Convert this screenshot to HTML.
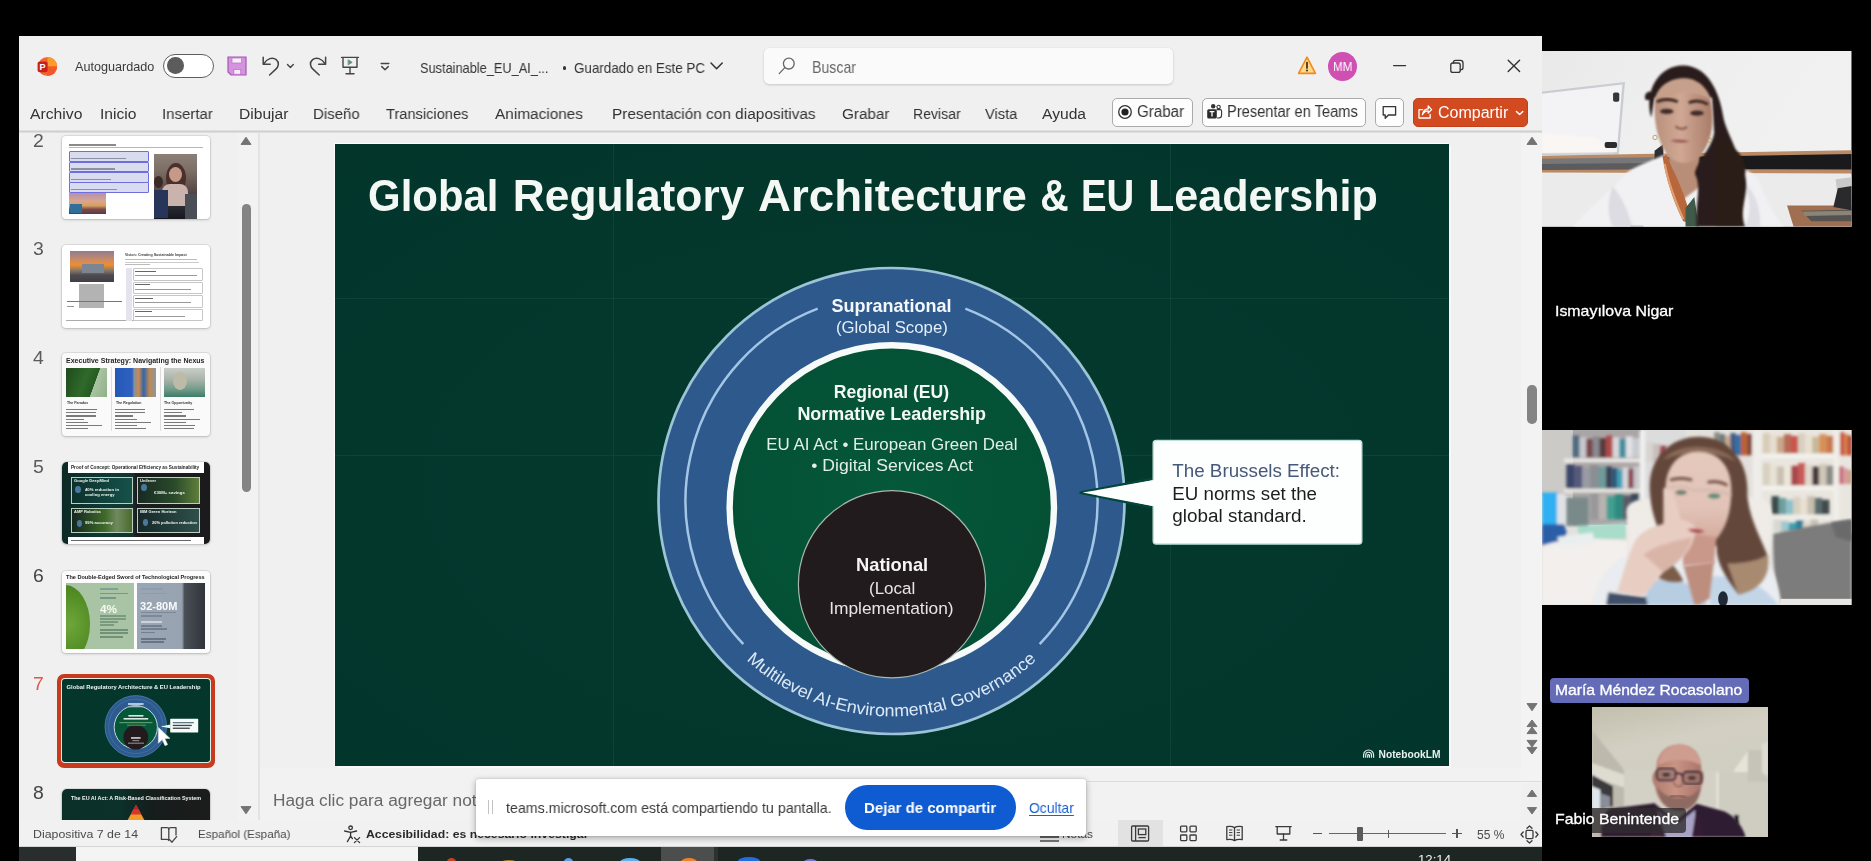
<!DOCTYPE html>
<html lang="es">
<head>
<meta charset="utf-8">
<title>PowerPoint – Microsoft Teams</title>
<style>
*{box-sizing:border-box;margin:0;padding:0}
html,body{width:1871px;height:861px;overflow:hidden;background:#000}
body{font-family:"Liberation Sans",sans-serif;position:relative;color:#222}
.abs{position:absolute}
.abs i{display:block}
#win{position:absolute;left:19px;top:36px;width:1523px;height:811px;background:#f0f0f0}
.t{position:absolute;white-space:nowrap;line-height:1;transform-origin:0 50%;will-change:transform}
.toggle{border:1.3px solid #5f5f5f;border-radius:12px;background:#fff}
.toggle i{position:absolute;left:3.6px;top:2.4px;width:16.6px;height:16.6px;border-radius:50%;background:#5c5c5c}
.search{background:#fafafa;border-radius:5px;box-shadow:0 1px 2.5px rgba(0,0,0,.16),0 0 1px rgba(0,0,0,.08)}
.avatar{border-radius:50%;background:#cf4fb2}
.btn{background:#fdfdfd;border:1px solid #ababab;border-radius:5px}
.share{background:#d24a20;border-radius:5px;border:1px solid #c2411a}
.th{border-radius:4px;box-shadow:0 0 0 1px rgba(0,0,0,.07),0 1px 3px rgba(0,0,0,.18);overflow:hidden}
svg#slide{box-shadow:-1px -1px 0 0 #fbfbfb,2px 2px 0 0 #f8f8f8}
.sharebar{background:#fff;border-radius:3px;box-shadow:0 2px 7px rgba(0,0,0,.32),0 0 2px rgba(0,0,0,.2)}
</style>
</head>
<body>
<div id="win"></div>
<div class="titlebar">
<svg class="abs" style="left:37px;top:56px" width="21" height="21" viewBox="0 0 21 21">
<circle cx="10.5" cy="10.5" r="9.6" fill="#f2682a"/>
<path d="M10.5 0.9 A9.6 9.6 0 0 1 20.1 10.5 L10.5 10.5Z" fill="#fb9b2a"/>
<path d="M10.5 10.5 L20.1 10.5 A9.6 9.6 0 0 1 10.5 20.1Z" fill="#f4572a"/>
<rect x="0.6" y="5.6" width="10" height="10.6" rx="2" fill="#c8201c"/>
<text x="5.6" y="14.2" font-family="Liberation Sans, sans-serif" font-weight="700" font-size="9" fill="#fff" text-anchor="middle">P</text>
</svg>
<span class="t" style="left:75.4px;top:60.7px;font-size:12.40px;color:#3b3b3b;transform:scaleX(1.0185);">Autoguardado</span>
<div class="abs toggle" style="left:162.5px;top:54px;width:51.5px;height:24px"><i></i></div>
<svg class="abs" style="left:227px;top:56px" width="20" height="20" viewBox="0 0 20 20">
<path d="M1 1 H19 V19 H4 L1 16Z" fill="#d592de" stroke="#a556b6" stroke-width="1.2"/>
<rect x="5" y="2" width="9.6" height="5" fill="#f8eefa" stroke="#b56fc4" stroke-width="0.7"/>
<rect x="6.9" y="13.6" width="6.8" height="4.6" fill="#f8eefa" stroke="#b56fc4" stroke-width="0.7"/>
</svg>
<svg class="abs" style="left:260px;top:54px" width="38" height="24" viewBox="0 0 38 24" fill="none" stroke="#444" stroke-width="1.5" stroke-linecap="round" stroke-linejoin="round">
<path d="M3.2 3.2 V10.2 H10.2"/><path d="M3.6 10 C7 4.5 12.5 2.6 16.2 5.6 C19.6 8.4 18.6 12.8 15.6 15.4 L9.6 21"/>
<path d="M27.5 10.6 L30.4 13.5 L33.3 10.6" stroke-width="1.4"/></svg>
<svg class="abs" style="left:305px;top:54px" width="24" height="24" viewBox="0 0 24 24" fill="none" stroke="#444" stroke-width="1.5" stroke-linecap="round" stroke-linejoin="round">
<path d="M20.6 3.2 V10.2 H13.6"/><path d="M20.2 10 C16.8 4.5 11.3 2.6 7.6 5.6 C4.2 8.4 5.2 12.8 8.2 15.4 L14.2 21"/></svg>
<svg class="abs" style="left:339px;top:55px" width="22" height="22" viewBox="0 0 22 22" fill="none" stroke="#444" stroke-width="1.4" stroke-linecap="round" stroke-linejoin="round">
<path d="M2.6 2.4 H19.4"/><path d="M4 2.6 V12.2 H18 V2.6"/><path d="M11 12.4 V18.6"/><path d="M7 18.8 H15"/>
<path d="M9.4 4.9 L13.2 7.3 L9.4 9.7Z" fill="#5f8a86" stroke="#5f8a86" stroke-width="0.8"/></svg>
<svg class="abs" style="left:378px;top:60px" width="14" height="14" viewBox="0 0 14 14" fill="none" stroke="#444" stroke-width="1.5" stroke-linecap="round" stroke-linejoin="round">
<path d="M3.2 3.5 H10.8"/><path d="M3.8 6.6 L7 9.7 L10.2 6.6"/></svg>
<span class="t" style="left:419.7px;top:60.7px;font-size:14.20px;color:#333;transform:scaleX(0.9001);">Sustainable_EU_AI_...</span>
<div class="abs" style="left:562.6px;top:66.4px;width:3.4px;height:3.4px;border-radius:50%;background:#333"></div>
<span class="t" style="left:573.6px;top:60.7px;font-size:14.20px;color:#333;transform:scaleX(0.9444);">Guardado en Este PC</span>
<svg class="abs" style="left:709px;top:60px" width="15" height="12" viewBox="0 0 15 12" fill="none" stroke="#333" stroke-width="1.5" stroke-linecap="round" stroke-linejoin="round"><path d="M2 3 L7.6 8.8 L13.2 3"/></svg>
<div class="abs search" style="left:763.5px;top:48px;width:409px;height:36px"></div>
<svg class="abs" style="left:777px;top:56px" width="20" height="20" viewBox="0 0 20 20" fill="none" stroke="#666" stroke-width="1.3" stroke-linecap="round"><circle cx="11.8" cy="7.6" r="5.4"/><path d="M7.8 11.6 L2.2 17.6"/></svg>
<span class="t" style="left:812.0px;top:59.1px;font-size:16.40px;color:#666;transform:scaleX(0.8625);">Buscar</span>
<svg class="abs" style="left:1297px;top:55px" width="20" height="20" viewBox="0 0 20 20">
<path d="M10 2.2 L18.4 18.4 H1.6Z" fill="#ffd88a" stroke="#f08a1c" stroke-width="1.6" stroke-linejoin="round"/>
<path d="M10 7.5 V13" stroke="#3a2a10" stroke-width="1.7" stroke-linecap="round"/><circle cx="10" cy="15.6" r="1" fill="#3a2a10"/></svg>
<div class="abs avatar" style="left:1328px;top:51.5px;width:29.4px;height:29.4px"></div>
<span class="t" style="left:1333.3px;top:60.8px;font-size:12.50px;color:#fff;transform:scaleX(0.9266);">MM</span>
<svg class="abs" style="left:1390px;top:56px" width="140" height="20" viewBox="0 0 140 20" fill="none" stroke="#333" stroke-width="1.3" stroke-linecap="round" stroke-linejoin="round">
<path d="M3.6 9.6 H15.6"/>
<rect x="60.8" y="7" width="9.4" height="9.4" rx="2"/><path d="M63.4 6.9 V6.4 C63.4 5.2 64.4 4.4 65.6 4.4 H70.4 C72 4.4 73 5.4 73 7 V11.4 C73 12.6 72.2 13.6 71 13.6 H70.4"/>
<path d="M118.2 4.2 L129.6 15.6 M129.6 4.2 L118.2 15.6" stroke-width="1.4"/></svg>
</div>
<div class="menubar">
<span class="t" style="left:29.6px;top:106.2px;font-size:15.50px;color:#333;transform:scaleX(1.0138);">Archivo</span>
<span class="t" style="left:99.5px;top:106.2px;font-size:15.50px;color:#333;transform:scaleX(1.0086);">Inicio</span>
<span class="t" style="left:162.2px;top:106.2px;font-size:15.50px;color:#333;transform:scaleX(0.9665);">Insertar</span>
<span class="t" style="left:238.5px;top:106.2px;font-size:15.50px;color:#333;transform:scaleX(1.0059);">Dibujar</span>
<span class="t" style="left:313.3px;top:106.2px;font-size:15.50px;color:#333;transform:scaleX(0.9658);">Diseño</span>
<span class="t" style="left:386.0px;top:106.2px;font-size:15.50px;color:#333;transform:scaleX(0.9439);">Transiciones</span>
<span class="t" style="left:495.4px;top:106.2px;font-size:15.50px;color:#333;transform:scaleX(0.9915);">Animaciones</span>
<span class="t" style="left:612.2px;top:106.2px;font-size:15.50px;color:#333;transform:scaleX(0.9928);">Presentación con diapositivas</span>
<span class="t" style="left:842.0px;top:106.2px;font-size:15.50px;color:#333;transform:scaleX(0.9845);">Grabar</span>
<span class="t" style="left:912.8px;top:106.2px;font-size:15.50px;color:#333;transform:scaleX(0.9078);">Revisar</span>
<span class="t" style="left:985.0px;top:106.2px;font-size:15.50px;color:#333;transform:scaleX(0.9477);">Vista</span>
<span class="t" style="left:1042.0px;top:106.2px;font-size:15.50px;color:#333;transform:scaleX(1.0075);">Ayuda</span>
<div class="abs btn" style="left:1112px;top:97.8px;width:80.6px;height:29px"></div>
<svg class="abs" style="left:1117px;top:103.6px" width="16" height="16" viewBox="0 0 16 16"><circle cx="8" cy="8" r="6.3" fill="none" stroke="#333" stroke-width="1.3"/><circle cx="8" cy="8" r="3.6" fill="#222"/></svg>
<span class="t" style="left:1137.4px;top:104.4px;font-size:16.00px;color:#333;transform:scaleX(0.9458);">Grabar</span>
<div class="abs btn" style="left:1202px;top:97.8px;width:163.5px;height:29px"></div>
<svg class="abs" style="left:1206px;top:103.2px" width="17" height="17" viewBox="0 0 17 17">
<circle cx="7.2" cy="3.2" r="2.2" fill="#333"/><circle cx="12.6" cy="4" r="1.7" fill="none" stroke="#333" stroke-width="1.1"/>
<path d="M10.6 6.6 H14.2 C15 6.6 15.6 7.2 15.6 8 V12 C15.6 13.8 14.4 15 12.8 15 H11" fill="none" stroke="#333" stroke-width="1.1"/>
<rect x="1.2" y="6.2" width="9.6" height="9.4" rx="1.6" fill="#2a2a2a"/>
<path d="M3.6 8.6 H8.4 M6 8.6 V13.4" stroke="#fff" stroke-width="1.3"/></svg>
<span class="t" style="left:1227.1px;top:104.4px;font-size:16.00px;color:#333;transform:scaleX(0.9147);">Presentar en Teams</span>
<div class="abs btn" style="left:1375px;top:97.8px;width:28.6px;height:29px"></div>
<svg class="abs" style="left:1381px;top:103.6px" width="17" height="17" viewBox="0 0 17 17" fill="none" stroke="#333" stroke-width="1.3" stroke-linejoin="round"><path d="M2.2 2.6 H14.6 V11 H7.4 L4.2 14.2 V11 H2.2Z"/></svg>
<div class="abs share" style="left:1413px;top:97.8px;width:115px;height:29px"></div>
<svg class="abs" style="left:1417px;top:103.4px" width="16" height="17" viewBox="0 0 16 17" fill="none" stroke="#fff" stroke-width="1.3" stroke-linecap="round" stroke-linejoin="round">
<path d="M5.6 6.6 H2 V15 H13.2 V11.4"/><path d="M5.4 11.6 C6 8 8.2 6 11.2 5.8 V3 L14.6 6.6 L11.2 10 V7.8 C8.8 7.8 7 9 5.4 11.6Z"/></svg>
<span class="t" style="left:1437.8px;top:104.5px;font-size:16.00px;color:#fff;">Compartir</span>
<svg class="abs" style="left:1514px;top:108px" width="11" height="10" viewBox="0 0 11 10" fill="none" stroke="#fff" stroke-width="1.4" stroke-linecap="round" stroke-linejoin="round"><path d="M2.4 3.4 L5.6 6.6 L8.8 3.4"/></svg>
</div>
<div class="abs" style="left:19px;top:130px;width:1523px;height:3px;background:linear-gradient(#e6e6e6,#d0d0d0 50%,#e4e4e4)"></div>
<div class="thumbs">
<div class="abs" style="left:258px;top:133px;width:2px;height:687px;background:#e3e3e3"></div>
<div class="abs" style="left:238px;top:133px;width:20px;height:687px;background:#f2f2f2"></div>
<svg class="abs" style="left:240px;top:136px" width="12" height="10" viewBox="0 0 12 10"><path d="M6 1.2 L11 8.4 H1Z" fill="#737373" stroke="#737373" stroke-width="1" stroke-linejoin="round"/></svg>
<div class="abs" style="left:241.5px;top:204px;width:9px;height:287.5px;border-radius:4.5px;background:#848484"></div>
<svg class="abs" style="left:240px;top:805px" width="12" height="10" viewBox="0 0 12 10"><path d="M6 8.8 L11 1.6 H1Z" fill="#737373" stroke="#737373" stroke-width="1" stroke-linejoin="round"/></svg>
<span class="t" style="left:32.7px;top:131.6px;font-size:18.80px;color:#5a5a5a;transform:scaleX(1.0332);">2</span>
<div class="abs th" style="left:62px;top:136px;width:147.5px;height:83px;background:#fff">
<div class="abs" style="left:6.5px;top:8px;width:47px;height:1.6px;background:#8a8a8a"></div>
<div class="abs" style="left:6.5px;top:10.6px;width:134px;height:1.6px;background:#b9bb9c"></div>
<div class="abs" style="left:6.5px;top:15.2px;width:80px;height:10.6px;background:#d9dcee;border:1px solid #6e6fdc;border-radius:1px"></div>
<div class="abs" style="left:8.5px;top:22.0px;width:55px;height:1.2px;background:#8d8fa6"></div>
<div class="abs" style="left:6.5px;top:25.6px;width:80px;height:10.6px;background:#d9dcee;border:1px solid #6e6fdc;border-radius:1px"></div>
<div class="abs" style="left:8.5px;top:32.4px;width:44px;height:1.2px;background:#8d8fa6"></div>
<div class="abs" style="left:6.5px;top:36.0px;width:80px;height:10.6px;background:#d9dcee;border:1px solid #6e6fdc;border-radius:1px"></div>
<div class="abs" style="left:8.5px;top:42.8px;width:40px;height:1.2px;background:#8d8fa6"></div>
<div class="abs" style="left:6.5px;top:46.4px;width:80px;height:10.6px;background:#d9dcee;border:1px solid #6e6fdc;border-radius:1px"></div>
<div class="abs" style="left:8.5px;top:53.2px;width:46px;height:1.2px;background:#8d8fa6"></div>
<div class="abs" style="left:6.5px;top:57px;width:37.2px;height:21px;background:linear-gradient(180deg,#b58fb3 0%,#d9a68e 38%,#d8a060 60%,#7a4a4a 78%,#5a3a46 100%)"><div class="abs" style="left:1px;top:11px;width:12px;height:9px;background:#2f6f9a"></div></div>
<div class="abs" style="left:92px;top:18px;width:43px;height:64.5px;background:linear-gradient(180deg,#8c8076 0%,#7d6e66 25%,#5a4b48 55%,#2a2a33 80%,#17171c 100%);overflow:hidden"><div class="abs" style="left:12px;top:9px;width:20px;height:30px;border-radius:50%;background:#4a2f2a"></div><div class="abs" style="left:15px;top:13px;width:13px;height:15px;border-radius:50%;background:#c69a88"></div><div class="abs" style="left:8px;top:30px;width:26px;height:22px;border-radius:8px 8px 0 0;background:#c9b3ac"></div><div class="abs" style="left:0;top:22px;width:9px;height:12px;border-radius:50%;background:#3a2a26"></div><div class="abs" style="left:0;top:36px;width:14px;height:28px;background:#27355a"></div><div class="abs" style="left:31px;top:40px;width:12px;height:25px;background:#4b4f55"></div></div>
</div>
<span class="t" style="left:32.7px;top:240.4px;font-size:18.80px;color:#5a5a5a;transform:scaleX(1.0332);">3</span>
<div class="abs th" style="left:62px;top:244.5px;width:147.5px;height:83px;background:#fff">
<div class="abs" style="left:8px;top:6.5px;width:43.6px;height:31.4px;background:linear-gradient(180deg,#8f7d90 0%,#c98a68 28%,#ef8d2c 45%,#8a7a66 62%,#4d4b4f 78%,#3f3f44 100%)"><div class="abs" style="left:12px;top:13px;width:22px;height:9px;background:#7b8692"></div></div>
<div class="abs" style="left:16.6px;top:39.5px;width:25.4px;height:24px;background:#b3b3b3"></div>
<div class="abs" style="left:5px;top:56.4px;width:55px;height:1.3px;background:#777"></div>
<div class="abs" style="left:5px;top:61px;width:7px;height:1.3px;background:#999"></div>
<div class="abs" style="left:4px;top:75.6px;width:68px;height:1.2px;background:#aaa"></div>
<div class="abs" style="left:63px;top:14.6px;width:72px;height:1px;background:#bbb"></div>
<div class="abs" style="left:63px;top:17px;width:74px;height:1px;background:#ccc"></div>
<div class="abs" style="left:63px;top:19.4px;width:25px;height:1px;background:#bbb"></div>
<div class="abs" style="left:64px;top:23px;width:6px;height:53px;background:#e5e4ee"></div>
<div class="abs" style="left:70.5px;top:23.6px;width:70px;height:12.6px;border:1px solid #c6c6c6;border-radius:1px;background:#fff"></div>
<div class="abs" style="left:72.5px;top:26.0px;width:21px;height:1.2px;background:#666"></div>
<div class="abs" style="left:72.5px;top:30.6px;width:62px;height:1px;background:#999"></div>
<div class="abs" style="left:70.5px;top:37.1px;width:70px;height:12.6px;border:1px solid #c6c6c6;border-radius:1px;background:#fff"></div>
<div class="abs" style="left:72.5px;top:39.5px;width:15px;height:1.2px;background:#666"></div>
<div class="abs" style="left:72.5px;top:44.1px;width:56px;height:1px;background:#999"></div>
<div class="abs" style="left:70.5px;top:50.6px;width:70px;height:12.6px;border:1px solid #c6c6c6;border-radius:1px;background:#fff"></div>
<div class="abs" style="left:72.5px;top:53.0px;width:18px;height:1.2px;background:#666"></div>
<div class="abs" style="left:72.5px;top:57.6px;width:56px;height:1px;background:#999"></div>
<div class="abs" style="left:70.5px;top:64.1px;width:70px;height:12.6px;border:1px solid #c6c6c6;border-radius:1px;background:#fff"></div>
<div class="abs" style="left:72.5px;top:66.5px;width:17px;height:1.2px;background:#666"></div>
<div class="abs" style="left:72.5px;top:71.1px;width:50px;height:1px;background:#999"></div>
</div>
<span class="t" style="left:32.7px;top:349.4px;font-size:18.80px;color:#5a5a5a;transform:scaleX(1.0332);">4</span>
<div class="abs th" style="left:62px;top:353px;width:147.5px;height:83px;background:#fafafa">
<div class="abs" style="left:4.4px;top:15px;width:40.8px;height:29px;background:linear-gradient(110deg,#1f4a1c 0%,#2f6a2a 45%,#265a22 66%,#a9c4a0 67%,#8fb08a 100%)"></div>
<div class="abs" style="left:4.4px;top:56.0px;width:31px;height:1.3px;background:#7a7a7a"></div>
<div class="abs" style="left:4.4px;top:59.1px;width:30px;height:1.3px;background:#7a7a7a"></div>
<div class="abs" style="left:4.4px;top:62.3px;width:30px;height:1.3px;background:#7a7a7a"></div>
<div class="abs" style="left:4.4px;top:65.5px;width:18px;height:1.3px;background:#7a7a7a"></div>
<div class="abs" style="left:4.4px;top:68.6px;width:22px;height:1.3px;background:#7a7a7a"></div>
<div class="abs" style="left:4.4px;top:71.8px;width:36px;height:1.3px;background:#7a7a7a"></div>
<div class="abs" style="left:4.4px;top:74.9px;width:22px;height:1.3px;background:#7a7a7a"></div>
<div class="abs" style="left:49.2px;top:14px;width:1px;height:64px;background:#ddd"></div>
<div class="abs" style="left:53.2px;top:15px;width:40.8px;height:29px;background:linear-gradient(90deg,#2458b8 0%,#2f62c0 42%,#7f8fa6 46%,#c98a50 58%,#2f66b0 70%,#c0884e 84%,#8a97a6 100%)"></div>
<div class="abs" style="left:53.2px;top:56.0px;width:30px;height:1.3px;background:#7a7a7a"></div>
<div class="abs" style="left:53.2px;top:59.1px;width:30px;height:1.3px;background:#7a7a7a"></div>
<div class="abs" style="left:53.2px;top:62.3px;width:18px;height:1.3px;background:#7a7a7a"></div>
<div class="abs" style="left:53.2px;top:65.5px;width:22px;height:1.3px;background:#7a7a7a"></div>
<div class="abs" style="left:53.2px;top:68.6px;width:36px;height:1.3px;background:#7a7a7a"></div>
<div class="abs" style="left:53.2px;top:71.8px;width:22px;height:1.3px;background:#7a7a7a"></div>
<div class="abs" style="left:53.2px;top:74.9px;width:31px;height:1.3px;background:#7a7a7a"></div>
<div class="abs" style="left:98.0px;top:14px;width:1px;height:64px;background:#ddd"></div>
<div class="abs" style="left:102.0px;top:15px;width:40.8px;height:29px;background:linear-gradient(180deg,#c9cdc8 0%,#a9b3a8 40%,#6f9a88 75%,#3f7a68 100%)"></div>
<div class="abs" style="left:102.0px;top:56.0px;width:30px;height:1.3px;background:#7a7a7a"></div>
<div class="abs" style="left:102.0px;top:59.1px;width:18px;height:1.3px;background:#7a7a7a"></div>
<div class="abs" style="left:102.0px;top:62.3px;width:22px;height:1.3px;background:#7a7a7a"></div>
<div class="abs" style="left:102.0px;top:65.5px;width:36px;height:1.3px;background:#7a7a7a"></div>
<div class="abs" style="left:102.0px;top:68.6px;width:22px;height:1.3px;background:#7a7a7a"></div>
<div class="abs" style="left:102.0px;top:71.8px;width:31px;height:1.3px;background:#7a7a7a"></div>
<div class="abs" style="left:102.0px;top:74.9px;width:30px;height:1.3px;background:#7a7a7a"></div>
<div class="abs" style="left:58px;top:19px;width:14px;height:18px;border-radius:50%;background:#bdbba8;left:111px"></div>
</div>
<span class="t" style="left:32.7px;top:457.6px;font-size:18.80px;color:#5a5a5a;transform:scaleX(1.0332);">5</span>
<div class="abs th" style="left:62px;top:461.5px;width:147.5px;height:82.5px;background:linear-gradient(90deg,#0c2a26 0%,#0e3a33 30%,#15332d 48%,#1c1c1e 50%,#1b1b1d 100%);border-radius:5px">
<div class="abs" style="left:5.5px;top:0;width:136.5px;height:11px;background:#fff"></div>
<div class="abs" style="left:5.5px;top:75.6px;width:136.5px;height:7px;background:#fff"></div>
<div class="abs" style="left:9px;top:78.6px;width:120px;height:1.2px;background:#666"></div>
<div class="abs" style="left:9.3px;top:15.0px;width:62.2px;height:27.6px;background:linear-gradient(90deg,#0d302c,#15524a);border:1px solid #b9cfc0"></div>
<div class="abs" style="left:75.4px;top:15.0px;width:62.8px;height:27.6px;background:linear-gradient(90deg,#172a22 0%,#2a4a2a 60%,#5f7f3a 100%);border:1px solid #b9cfc0"></div>
<div class="abs" style="left:9.3px;top:46.3px;width:62.2px;height:25.7px;background:linear-gradient(90deg,#14261f 0%,#3f6a2a 55%,#6f8a60 75%,#4a6a2a 100%);border:1px solid #b9cfc0"></div>
<div class="abs" style="left:75.4px;top:46.3px;width:62.8px;height:25.7px;background:linear-gradient(90deg,#16282a,#2f4f4a);border:1px solid #b9cfc0"></div>
<div class="abs" style="left:13.4px;top:24.6px;width:5.6px;height:7px;border-radius:50%;background:#4a779c"></div>
<div class="abs" style="left:79.4px;top:22.6px;width:5.6px;height:7px;border-radius:50%;background:#4a779c"></div>
<div class="abs" style="left:14.6px;top:58.4px;width:5.6px;height:7px;border-radius:50%;background:#4a779c"></div>
<div class="abs" style="left:80.6px;top:57.6px;width:5.6px;height:7px;border-radius:50%;background:#4a779c"></div>
</div>
<span class="t" style="left:32.7px;top:566.6px;font-size:18.80px;color:#444;transform:scaleX(1.0332);">6</span>
<div class="abs th" style="left:62px;top:571px;width:147.5px;height:82px;background:#fcfcfc">
<div class="abs" style="left:4.2px;top:12.4px;width:68px;height:66px;background:#a9c4a4;overflow:hidden"><div class="abs" style="left:-26px;top:2px;width:50px;height:78px;border-radius:50%;background:radial-gradient(ellipse at 60% 50%,#6fa63a 0%,#4f8a22 60%,#3f741c 100%)"></div></div>
<div class="abs" style="left:75.2px;top:12.4px;width:68.2px;height:66px;background:linear-gradient(90deg,#9aa6b4 0%,#98a3b2 66%,#4a4f56 70%,#30343a 100%)"></div>
<div class="abs" style="left:38.0px;top:17.0px;width:18px;height:1.7px;opacity:.6;background:#5f8f8a"></div>
<div class="abs" style="left:38.0px;top:21.6px;width:28px;height:1.7px;opacity:.6;background:#4f7f7a"></div>
<div class="abs" style="left:38.0px;top:26.0px;width:16px;height:1.7px;opacity:.6;background:#4f7f7a"></div>
<div class="abs" style="left:38.0px;top:44.0px;width:26px;height:1.7px;opacity:.6;background:#5f7f6a"></div>
<div class="abs" style="left:38.0px;top:47.0px;width:26px;height:1.7px;opacity:.6;background:#5f7f6a"></div>
<div class="abs" style="left:38.0px;top:50.0px;width:18px;height:1.7px;opacity:.6;background:#5f7f6a"></div>
<div class="abs" style="left:38.0px;top:53.0px;width:14px;height:1.7px;opacity:.6;background:#5f7f6a"></div>
<div class="abs" style="left:38.0px;top:58.0px;width:28px;height:1.7px;opacity:.6;background:#4f6f5a"></div>
<div class="abs" style="left:38.0px;top:61.4px;width:28px;height:1.7px;opacity:.6;background:#4f6f5a"></div>
<div class="abs" style="left:38.0px;top:65.0px;width:23px;height:1.7px;opacity:.6;background:#4f6f5a"></div>
<div class="abs" style="left:78.6px;top:17.0px;width:22px;height:1.7px;opacity:.6;background:#7f9ab0"></div>
<div class="abs" style="left:78.6px;top:21.6px;width:25px;height:1.7px;opacity:.6;background:#7f9ab0"></div>
<div class="abs" style="left:78.6px;top:40.8px;width:35px;height:1.7px;opacity:.6;background:#6a7484"></div>
<div class="abs" style="left:78.6px;top:44.0px;width:21px;height:1.7px;opacity:.6;background:#6a7484"></div>
<div class="abs" style="left:78.6px;top:50.0px;width:21px;height:1.7px;opacity:.6;background:#eef0f4"></div>
<div class="abs" style="left:78.6px;top:54.4px;width:21px;height:1.7px;opacity:.6;background:#5a6474"></div>
<div class="abs" style="left:78.6px;top:57.4px;width:26px;height:1.7px;opacity:.6;background:#5a6474"></div>
<div class="abs" style="left:78.6px;top:60.6px;width:14px;height:1.7px;opacity:.6;background:#5a6474"></div>
<div class="abs" style="left:78.6px;top:67.0px;width:25px;height:1.7px;opacity:.6;background:#4a5464"></div>
<div class="abs" style="left:78.6px;top:70.4px;width:23px;height:1.7px;opacity:.6;background:#4a5464"></div>
</div>
<span class="t" style="left:32.7px;top:675.2px;font-size:18.80px;color:#e0574c;transform:scaleX(1.0332);">7</span>
<div class="abs" style="left:56.5px;top:674px;width:158.5px;height:93.5px;border-radius:7px;background:#c73a1e"></div>
<div class="abs" style="left:60.6px;top:678px;width:150px;height:85px;border-radius:4px;background:#dfeee6"></div>
<svg class="abs" style="left:61.6px;top:679px;will-change:transform" width="148" height="83" viewBox="0 0 148 83">
<rect width="148" height="83" rx="3" fill="#04362c"/>
<circle cx="73.8" cy="47.4" r="30.8" fill="#2d5b90" stroke="#4f7fae" stroke-width="0.8"/>
<circle cx="73.8" cy="47.4" r="27.2" fill="none" stroke="#4a78a8" stroke-width="0.6"/>
<circle cx="73.8" cy="48.2" r="21.6" fill="#06563a" stroke="#cfe6e0" stroke-width="0.9"/>
<circle cx="73.8" cy="58.3" r="12.4" fill="#231a1d"/>
<path d="M98.6 47.4 L108.4 45.4 V49.2Z" fill="#eef6f4"/>
<rect x="108.2" y="39.8" width="28" height="13.6" rx="0.6" fill="#f4fbfa"/>
<g fill="#5f7a8a"><rect x="110.8" y="43" width="21" height="1.3"/><rect x="110.8" y="45.8" width="19" height="1.3" fill="#444"/><rect x="110.8" y="48.6" width="17" height="1.3" fill="#444"/></g>
<g fill="#cfe0ee"><rect x="66" y="24.2" width="15.6" height="1.6"/><rect x="66.8" y="27" width="14" height="1.3" fill="#9fb8d0"/></g>
<g fill="#dcebe2"><rect x="66.4" y="36" width="15" height="1.6"/><rect x="61.6" y="39" width="24.6" height="1.6"/><rect x="57.4" y="43" width="33" height="1.2" fill="#5f9a6a"/><rect x="65" y="45.6" width="19" height="1.2" fill="#4f8a5a"/></g>
<g fill="#e6e0e2"><rect x="69" y="58.2" width="9.6" height="1.5"/><rect x="70.4" y="61" width="6.8" height="1.2" fill="#8a8286"/><rect x="66" y="63.6" width="16" height="1.2" fill="#8a8286"/></g>
<text x="4.6" y="9.5" font-family="Liberation Sans, sans-serif" font-weight="700" font-size="6.2" fill="#eef6f2" textLength="134" lengthAdjust="spacingAndGlyphs">Global Regulatory Architecture &amp; EU Leadership</text>
<path d="M96.4 48.4 L96.4 64.2 L100.2 60.6 L103 66.8 L105.6 65.6 L102.8 59.6 L108 59.4Z" fill="#fff" stroke="#e8e8e8" stroke-width="0.5" stroke-linejoin="round"/>
</svg>
<span class="t" style="left:32.7px;top:783.8px;font-size:18.80px;color:#444;transform:scaleX(1.0332);">8</span>
<div class="abs th" style="left:62px;top:788.5px;width:147.5px;height:34px;background:linear-gradient(90deg,#0a2e28 0%,#0c302a 40%,#151d1b 60%,#1c1c1c 100%);border-radius:5px 5px 0 0;overflow:hidden">
<svg class="abs" style="left:62.5px;top:15px" width="22" height="19" viewBox="0 0 22 20"><path d="M11 1 L21 19 H1Z" fill="#f29a2a"/><path d="M11 1 L16.6 11 H5.4Z" fill="#d8362a"/><path d="M11 1 L13.6 5.6 H8.4Z" fill="#b8202a"/></svg>
</div>
<span class="t" style="left:125.2px;top:252.8px;font-size:15.20px;color:#3a3a3a;will-change:auto;transform-origin:0 0;transform:scale(0.2380,0.2500);font-weight:700;">Vision: Creating Sustainable Impact</span>
<span class="t" style="left:66.2px;top:356.6px;font-size:29.60px;color:#252525;will-change:auto;transform-origin:0 0;transform:scale(0.2372,0.2500);font-weight:700;">Executive Strategy: Navigating the Nexus</span>
<span class="t" style="left:71.3px;top:464.6px;font-size:19.60px;color:#222;will-change:auto;transform-origin:0 0;transform:scale(0.2384,0.2500);font-weight:700;">Proof of Concept: Operational Efficiency as Sustainability</span>
<span class="t" style="left:66.4px;top:574.2px;font-size:23.20px;color:#222;will-change:auto;transform-origin:0 0;transform:scale(0.2398,0.2500);font-weight:700;">The Double-Edged Sword of Technological Progress</span>
<span class="t" style="left:73.9px;top:479.1px;font-size:16.80px;color:#eef4f0;will-change:auto;transform-origin:0 0;transform:scale(0.2454,0.2500);font-weight:700;">Google DeepMind</span>
<span class="t" style="left:84.8px;top:487.2px;font-size:17.20px;color:#eef4f0;will-change:auto;transform-origin:0 0;transform:scale(0.2472,0.2500);font-weight:700;">40% reduction in</span>
<span class="t" style="left:84.8px;top:491.6px;font-size:17.20px;color:#eef4f0;will-change:auto;transform-origin:0 0;transform:scale(0.2413,0.2500);font-weight:700;">cooling energy</span>
<span class="t" style="left:139.9px;top:479.1px;font-size:16.80px;color:#eef4f0;will-change:auto;transform-origin:0 0;transform:scale(0.2431,0.2500);font-weight:700;">Unilever</span>
<span class="t" style="left:154.0px;top:489.6px;font-size:17.20px;color:#eef4f0;will-change:auto;transform-origin:0 0;transform:scale(0.2528,0.2500);font-weight:700;">€30M+ savings</span>
<span class="t" style="left:73.9px;top:510.1px;font-size:16.80px;color:#eef4f0;will-change:auto;transform-origin:0 0;transform:scale(0.2389,0.2500);font-weight:700;">AMP Robotics</span>
<span class="t" style="left:84.8px;top:520.3px;font-size:17.20px;color:#eef4f0;will-change:auto;transform-origin:0 0;transform:scale(0.2445,0.2500);font-weight:700;">99% accuracy</span>
<span class="t" style="left:139.9px;top:510.1px;font-size:16.80px;color:#eef4f0;will-change:auto;transform-origin:0 0;transform:scale(0.2416,0.2500);font-weight:700;">IBM Green Horizon</span>
<span class="t" style="left:152.0px;top:520.3px;font-size:17.20px;color:#eef4f0;will-change:auto;transform-origin:0 0;transform:scale(0.2310,0.2500);font-weight:700;">20% pollution reduction</span>
<span class="t" style="left:66.8px;top:400.6px;font-size:14.80px;color:#333;will-change:auto;transform-origin:0 0;transform:scale(0.2387,0.2500);font-weight:700;">The Paradox</span>
<span class="t" style="left:115.5px;top:400.6px;font-size:14.80px;color:#333;will-change:auto;transform-origin:0 0;transform:scale(0.2367,0.2500);font-weight:700;">The Regulation</span>
<span class="t" style="left:164.2px;top:400.6px;font-size:14.80px;color:#333;will-change:auto;transform-origin:0 0;transform:scale(0.2459,0.2500);font-weight:700;">The Opportunity</span>
<span class="t" style="left:100.4px;top:603.7px;font-size:11.20px;color:#f6faf4;font-weight:700;transform:scaleX(1.0512);">4%</span>
<span class="t" style="left:140.4px;top:601.6px;font-size:10.20px;color:#fafafa;font-weight:700;transform:scaleX(1.0826);">32-80M</span>
<span class="t" style="left:70.5px;top:794.7px;font-size:22.00px;color:#f2f6f4;will-change:auto;transform-origin:0 0;transform:scale(0.2450,0.2500);font-weight:700;">The EU AI Act: A Risk-Based Classification System</span>
</div>
<svg class="abs" id="slide" style="left:335px;top:144px;will-change:transform" width="1114" height="622" viewBox="335 144 1114 622">
<defs><radialGradient id="gbg" cx="50%" cy="55%" r="75%"><stop offset="0" stop-color="#043a2e"/><stop offset="1" stop-color="#03352b"/></radialGradient><radialGradient id="ggr" cx="50%" cy="45%" r="60%"><stop offset="0" stop-color="#05583a"/><stop offset="1" stop-color="#044f35"/></radialGradient></defs>
<rect x="335" y="144" width="1114" height="622" fill="url(#gbg)"/>
<g stroke="#0f4a3c" stroke-width="1" opacity="0.75"><path d="M613.5 144V766M1170.5 144V766M335 298.5H1449M335 455.5H1449"/></g>
<text y="211.2" font-family="Liberation Sans, sans-serif" font-weight="700" font-size="44.4" fill="#f4f8f5"><tspan x="368.1" textLength="130.4" lengthAdjust="spacingAndGlyphs">Global</tspan> <tspan x="512.8" textLength="231.5" lengthAdjust="spacingAndGlyphs">Regulatory</tspan> <tspan x="758.0" textLength="269.0" lengthAdjust="spacingAndGlyphs">Architecture</tspan> <tspan x="1040.3" textLength="28.4" lengthAdjust="spacingAndGlyphs">&amp;</tspan> <tspan x="1080.9" textLength="53.3" lengthAdjust="spacingAndGlyphs">EU</tspan> <tspan x="1147.9" textLength="230.0" lengthAdjust="spacingAndGlyphs">Leadership</tspan></text>
<circle cx="891.5" cy="501.0" r="233" fill="#2d598c" stroke="#9cc4d6" stroke-width="2.7"/>
<path d="M965.32 308.68 A206.00 206.00 0 0 1 1039.68 644.10" fill="none" stroke="#a4c6e6" stroke-width="2.5"/>
<path d="M743.32 644.10 A206.00 206.00 0 0 1 817.68 308.68" fill="none" stroke="#a4c6e6" stroke-width="2.5"/>
<circle cx="891.8" cy="507.4" r="162.2" fill="url(#ggr)" stroke="#f6fbf9" stroke-width="6.4"/>
<circle cx="892" cy="584.2" r="93.6" fill="#211b1d" stroke="#a9b8ae" stroke-width="1.2"/>
<path d="M1080.8 492.6 L1154 478.6 V507.6Z" fill="#f8fcfb" stroke="#03473a" stroke-width="3" stroke-linejoin="round"/>
<rect x="1153.2" y="440.4" width="208.6" height="103.6" rx="3" fill="#fdfefe" stroke="#bfe3dc" stroke-width="1.4"/>
<path d="M1082.6 492.6 L1155 479.8 V506.4Z" fill="#fdfefe"/>
<text x="1172.3" y="476.6" font-family="Liberation Sans, sans-serif" font-size="18.8" fill="#47597a" textLength="167.7" lengthAdjust="spacingAndGlyphs">The Brussels Effect:</text>
<text x="1172.3" y="500.2" font-family="Liberation Sans, sans-serif" font-size="18.8" fill="#1d1d1d" textLength="144.7" lengthAdjust="spacingAndGlyphs">EU norms set the</text>
<text x="1172.3" y="522.0" font-family="Liberation Sans, sans-serif" font-size="18.8" fill="#1d1d1d" textLength="134.4" lengthAdjust="spacingAndGlyphs">global standard.</text>
<text x="831.6" y="311.6" font-family="Liberation Sans, sans-serif" font-weight="700" font-size="17.9" fill="#f4f8fc" textLength="120.0" lengthAdjust="spacingAndGlyphs">Supranational</text>
<text x="836.0" y="333.3" font-family="Liberation Sans, sans-serif" font-size="17.2" fill="#e4eef8" textLength="111.8" lengthAdjust="spacingAndGlyphs">(Global Scope)</text>
<text x="833.7" y="398.0" font-family="Liberation Sans, sans-serif" font-weight="700" font-size="17.9" fill="#f4f9f6" textLength="115.5" lengthAdjust="spacingAndGlyphs">Regional (EU)</text>
<text x="797.4" y="420.4" font-family="Liberation Sans, sans-serif" font-weight="700" font-size="17.9" fill="#f4f9f6" textLength="188.7" lengthAdjust="spacingAndGlyphs">Normative Leadership</text>
<text x="766.3" y="450.3" font-family="Liberation Sans, sans-serif" font-size="17.2" fill="#e2efe8" textLength="251.2" lengthAdjust="spacingAndGlyphs">EU AI Act • European Green Deal</text>
<text x="811.3" y="471.3" font-family="Liberation Sans, sans-serif" font-size="17.2" fill="#e2efe8" textLength="161.7" lengthAdjust="spacingAndGlyphs">• Digital Services Act</text>
<text x="856.0" y="571.3" font-family="Liberation Sans, sans-serif" font-weight="700" font-size="17.9" fill="#f6f4f4" textLength="72.2" lengthAdjust="spacingAndGlyphs">National</text>
<text x="869.0" y="594.0" font-family="Liberation Sans, sans-serif" font-size="17.2" fill="#e8e4e5" textLength="46.3" lengthAdjust="spacingAndGlyphs">(Local</text>
<text x="829.2" y="614.1" font-family="Liberation Sans, sans-serif" font-size="17.2" fill="#e8e4e5" textLength="124.4" lengthAdjust="spacingAndGlyphs">Implementation)</text>
<path id="curve" d="M676.10 501.00 A215.40 215.40 0 0 0 1106.90 501.00" fill="none"/>
<text font-family="Liberation Sans, sans-serif" font-size="17.2" fill="#dce9f6" textLength="318.8" lengthAdjust="spacingAndGlyphs"><textPath href="#curve" startOffset="50%" text-anchor="middle" textLength="318.8" lengthAdjust="spacingAndGlyphs">Multilevel AI-Environmental Governance</textPath></text>
<g fill="none" stroke="#dff0ea" stroke-width="1.15"><path d="M1363.6 757.8 V755 A5 5 0 0 1 1373.6 755 V757.8"/><path d="M1365.7 757.8 V755.2 A2.9 2.9 0 0 1 1371.5 755.2 V757.8"/><path d="M1367.7 757.8 V755.6 A0.9 0.9 0 0 1 1369.5 755.6 V757.8"/></g>
<text x="1378.5" y="757.8" font-family="Liberation Sans, sans-serif" font-weight="700" font-size="11.0" fill="#e6f2ee" textLength="61.9" lengthAdjust="spacingAndGlyphs">NotebookLM</text>
</svg>
<div class="abs" style="left:1521px;top:133px;width:21px;height:650px;background:#f3f3f3"></div>
<svg class="abs" style="left:1525.5px;top:136px" width="12" height="10" viewBox="0 0 12 10"><path d="M6 1.2 L11 8.4 H1Z" fill="#737373" stroke="#737373" stroke-width="1" stroke-linejoin="round"/></svg>
<div class="abs" style="left:1527.2px;top:384.6px;width:9.4px;height:39.4px;border-radius:4.7px;background:#848484"></div>
<svg class="abs" style="left:1525.5px;top:702px" width="12" height="10" viewBox="0 0 12 10"><path d="M6 8.8 L11 1.6 H1Z" fill="#737373" stroke="#737373" stroke-width="1" stroke-linejoin="round"/></svg>
<svg class="abs" style="left:1524.5px;top:718px" width="14" height="38" viewBox="0 0 14 38" fill="#737373" stroke="#737373" stroke-width="1" stroke-linejoin="round"><path d="M7 2 L12 8.6 H2Z"/><path d="M7 9 L12 15.6 H2Z"/><path d="M7 36 L12 29.4 H2Z"/><path d="M7 29 L12 22.4 H2Z"/></svg>
<div class="abs" style="left:260px;top:768px;width:1261px;height:52px;background:#f2f2f2"></div>
<div class="abs" style="left:1087px;top:781px;width:455px;height:1px;background:#dcdcdc"></div>
<span class="t" style="left:273.0px;top:793.4px;font-size:16.00px;color:#686868;transform:scaleX(1.0798);">Haga clic para agregar notas</span>
<svg class="abs" style="left:1525.5px;top:788px" width="12" height="28" viewBox="0 0 12 28" fill="#737373" stroke="#737373" stroke-width="1" stroke-linejoin="round"><path d="M6 2 L10.6 8.4 H1.4Z"/><path d="M6 26 L10.6 19.6 H1.4Z"/></svg>
<div class="abs" style="left:19px;top:820px;width:1523px;height:27px;background:#f1f1f1"></div>
<span class="t" style="left:32.8px;top:829.1px;font-size:11.80px;color:#4a4a4a;transform:scaleX(1.0464);">Diapositiva 7 de 14</span>
<svg class="abs" style="left:159px;top:825px" width="20" height="20" viewBox="0 0 20 20" fill="none" stroke="#444" stroke-width="1.3" stroke-linejoin="round" stroke-linecap="round"><path d="M2.4 2.6 H8 C9 2.6 9.8 3.2 9.8 4.2 V15.6 C9.8 14.8 9 14.4 8 14.4 H2.4Z"/><path d="M9.8 4.2 C9.8 3.2 10.6 2.6 11.6 2.6 H17 V10"/><path d="M10.6 14.6 L13 17.2 L17.6 11.6"/></svg>
<span class="t" style="left:197.5px;top:829.1px;font-size:11.80px;color:#4a4a4a;transform:scaleX(0.9863);">Español (España)</span>
<svg class="abs" style="left:342px;top:824px" width="20" height="20" viewBox="0 0 20 20" fill="none" stroke="#333" stroke-width="1.3" stroke-linejoin="round" stroke-linecap="round"><circle cx="8.6" cy="3.8" r="1.8"/><path d="M2.6 7 L8.6 8.4 L14.6 7"/><path d="M8.6 8.4 V12 L5.4 17.6 M8.6 12 L10.4 14.6"/><path d="M12.4 13.6 L17.6 18.6 M17.6 13.6 L12.4 18.6"/></svg>
<span class="t" style="left:365.6px;top:829.1px;font-size:11.80px;color:#2a2a2a;font-weight:700;transform:scaleX(1.0405);">Accesibilidad: es necesario investigar</span>
<div class="abs" style="left:1040px;top:832px;width:19px;height:1.6px;background:#555;box-shadow:0 4px 0 #666,0 8px 0 #777"></div>
<span class="t" style="left:1062.0px;top:829.1px;font-size:11.80px;color:#4a4a4a;transform:scaleX(1.0056);">Notas</span>
<div class="abs" style="left:1117.5px;top:820px;width:45.5px;height:27px;background:#e2e2e2"></div>
<svg class="abs" style="left:1130px;top:824px" width="20" height="19" viewBox="0 0 20 19" fill="none" stroke="#3a3a3a" stroke-width="1.3"><rect x="1.6" y="2" width="17" height="15" rx="1"/><path d="M5.6 2 V17"/><rect x="8.4" y="5" width="7.4" height="5.6"/><path d="M8.4 13.6 H15.8"/></svg>
<svg class="abs" style="left:1178.5px;top:824px" width="19" height="19" viewBox="0 0 19 19" fill="none" stroke="#3a3a3a" stroke-width="1.3"><rect x="1.6" y="2.2" width="6.2" height="5.6" rx="0.8"/><rect x="11" y="2.2" width="6.2" height="5.6" rx="0.8"/><rect x="1.6" y="11" width="6.2" height="5.6" rx="0.8"/><rect x="11" y="11" width="6.2" height="5.6" rx="0.8"/></svg>
<svg class="abs" style="left:1225px;top:824px" width="19" height="19" viewBox="0 0 19 19" fill="none" stroke="#3a3a3a" stroke-width="1.3" stroke-linejoin="round"><path d="M9.5 3.6 C7.6 2.4 4.6 2.2 1.8 2.6 V15.6 C4.6 15.2 7.6 15.4 9.5 16.6 C11.4 15.4 14.4 15.2 17.2 15.6 V2.6 C14.4 2.2 11.4 2.4 9.5 3.6Z"/><path d="M9.5 3.6 V16.6"/><path d="M4 6 H7.4 M4 8.6 H7.4 M4 11.2 H7.4 M11.6 6 H15 M11.6 8.6 H15 M11.6 11.2 H15" stroke-width="1"/></svg>
<svg class="abs" style="left:1273.5px;top:824px" width="19" height="19" viewBox="0 0 19 19" fill="none" stroke="#3a3a3a" stroke-width="1.3" stroke-linejoin="round" stroke-linecap="round"><path d="M1.8 2.6 H17.2"/><path d="M3.2 2.8 V10 H15.8 V2.8"/><path d="M9.5 10.2 V15.6"/><path d="M6.2 16 H12.8"/></svg>
<div class="abs" style="left:1313px;top:833px;width:9.4px;height:1.4px;background:#555"></div>
<div class="abs" style="left:1329px;top:832.6px;width:117px;height:1.8px;background:#666"></div>
<div class="abs" style="left:1387.6px;top:829.5px;width:1.3px;height:8px;background:#5a5a5a"></div>
<div class="abs" style="left:1357px;top:826.6px;width:6.2px;height:14px;background:#5a5a5a;border-radius:1px"></div>
<div class="abs" style="left:1452.4px;top:833px;width:9.4px;height:1.4px;background:#555"></div><div class="abs" style="left:1456.4px;top:829px;width:1.4px;height:9.4px;background:#555"></div>
<span class="t" style="left:1476.5px;top:828.9px;font-size:12.00px;color:#4a4a4a;">55 %</span>
<svg class="abs" style="left:1519.5px;top:824.5px" width="19" height="19" viewBox="0 0 19 19" fill="none" stroke="#3a3a3a" stroke-width="1.3" stroke-linejoin="round" stroke-linecap="round"><rect x="6" y="5.4" width="7" height="8.2" rx="1"/><path d="M7 3.2 L9.5 1 L12 3.2 M7 15.8 L9.5 18 L12 15.8 M3.2 7 L1 9.5 L3.2 12 M15.8 7 L18 9.5 L15.8 12"/></svg>
<div class="abs sharebar" style="left:475.6px;top:779px;width:610.4px;height:57px"></div>
<div class="abs" style="left:487.6px;top:800px;width:1.6px;height:14px;background:#c2c2c2"></div><div class="abs" style="left:491.6px;top:800px;width:1.6px;height:14px;background:#c2c2c2"></div>
<span class="t" style="left:506.0px;top:800.6px;font-size:14.60px;color:#3a3a3a;transform:scaleX(0.9743);">teams.microsoft.com está compartiendo tu pantalla.</span>
<div class="abs" style="left:845px;top:785.4px;width:171px;height:44.4px;border-radius:22.2px;background:#0f5bd2"></div>
<span class="t" style="left:864.3px;top:800.1px;font-size:15.20px;color:#fff;font-weight:700;transform:scaleX(0.9857);">Dejar de compartir</span>
<span class="t" style="left:1028.8px;top:800.6px;font-size:14.60px;color:#1a5fd0;transform:scaleX(0.9522);text-decoration:underline;text-underline-offset:2px;">Ocultar</span>
<div class="abs" style="left:19px;top:846.6px;width:1523px;height:14.4px;background:#1e2624"></div>
<div class="abs" style="left:19px;top:846.6px;width:57px;height:14.4px;background:#2a2d2d"></div>
<div class="abs" style="left:76px;top:846.6px;width:342px;height:14.4px;background:#f4f4f4"></div>
<div class="abs" style="left:19px;top:845.8px;width:1523px;height:1.4px;background:#d4d4d4"></div>
<div class="abs" style="left:661px;top:846.6px;width:52.6px;height:14.4px;background:#4b4e4d"></div>
<div class="abs" style="left:713.6px;top:846.6px;width:4.4px;height:14.4px;background:#2c3230"></div>
<div class="abs" style="left:447px;top:858.4px;width:9px;height:8px;border-radius:50% 50% 0 0;background:#c8402a"></div>
<div class="abs" style="left:499px;top:859.6px;width:20px;height:8px;border-radius:50% 50% 0 0;background:#a9802a"></div>
<div class="abs" style="left:564px;top:858.2px;width:9px;height:8px;border-radius:50% 50% 0 0;background:#5f9fe0"></div>
<div class="abs" style="left:620px;top:857.8px;width:20px;height:8px;border-radius:50% 50% 0 0;background:#58b0f0"></div>
<div class="abs" style="left:681px;top:857.8px;width:16px;height:8px;border-radius:50% 50% 0 0;background:#f0802a"></div>
<div class="abs" style="left:738px;top:857.4px;width:22px;height:8px;border-radius:50% 50% 0 0;background:#1f6fe0"></div>
<div class="abs" style="left:803px;top:858.8px;width:15px;height:8px;border-radius:50% 50% 0 0;background:#6f74d0"></div>
<span class="t" style="left:1418.0px;top:853.4px;font-size:13.20px;color:#f0f0f0;">12:14</span>
<div class="abs" style="left:1542px;top:0;width:329px;height:861px;background:#000"></div>
<svg class="abs" style="left:1542.3px;top:51.3px" width="309.7" height="175.8" viewBox="10 28 1403 797" preserveAspectRatio="none">
<defs>
<filter id="b1" x="-5%" y="-5%" width="110%" height="110%"><feGaussianBlur stdDeviation="6"/></filter>
<filter id="b2" x="-5%" y="-5%" width="110%" height="110%"><feGaussianBlur stdDeviation="11"/></filter>
<linearGradient id="wall1" x1="0" y1="0" x2="1" y2="0.4"><stop offset="0" stop-color="#e9e9e9"/><stop offset="0.45" stop-color="#efefef"/><stop offset="1" stop-color="#f1f1f1"/></linearGradient>
<linearGradient id="face1" x1="0" y1="0" x2="1" y2="0"><stop offset="0" stop-color="#b8907c"/><stop offset="0.45" stop-color="#d0a894"/><stop offset="1" stop-color="#a87c68"/></linearGradient>
<clipPath id="c1"><rect x="10" y="28" width="1403" height="797"/></clipPath>
</defs>
<g clip-path="url(#c1)">
<rect x="10" y="28" width="1403" height="797" fill="url(#wall1)"/>
<rect x="10" y="585" width="1403" height="240" fill="#ebebeb"/>
<!-- whiteboard -->
<path d="M10 212 L386 168 L358 497 L10 500Z" fill="#c9cdd2"/>
<path d="M10 222 L374 180 L349 486 L10 490Z" fill="#f3f2f5"/>
<path d="M10 400 L250 420 L349 486 L10 490Z" fill="#faf6f4" filter="url(#b1)"/>
<rect x="332" y="216" width="28" height="42" rx="8" fill="#33353a"/>
<rect x="294" y="440" width="56" height="28" rx="9" fill="#2a2c30"/>
<!-- wall trim -->
<path d="M10 503 L1413 478 V583 L10 579Z" fill="#b98a64"/>
<path d="M10 517 L520 510 L520 564 L10 567Z" fill="#77777a"/>
<path d="M10 540 L520 536 L520 564 L10 567Z" fill="#5c5c5f"/>
<path d="M520 510 L1413 495 V565 L520 564Z" fill="#1a1a1c"/>
<!-- desk and things on the right -->
<path d="M1120 728 H1413 V825 H1150Z" fill="#a06e50"/>
<path d="M1185 752 L1413 748 V800 L1230 800Z" fill="#55534f"/>
<path d="M1190 756 L1413 752 V772 L1200 776Z" fill="#8a8578"/>
<path d="M1340 610 L1413 600 V690 L1350 690Z" fill="#c8c8c8"/>
<path d="M1350 650 L1413 640 V750 L1330 735Z" fill="#2a2a2c"/>
<!-- chair -->
<path d="M520 480 L560 450 L560 560 L520 560Z" fill="#2f2f33"/>
<path d="M410 800 L460 760 L470 825 H410Z" fill="#555a60"/>
<!-- shirt -->
<g filter="url(#b1)">
<path d="M150 825 C220 740 300 680 400 575 C450 545 520 520 560 500 L700 640 L900 560 C960 570 990 600 1010 660 C1040 740 1080 790 1105 825Z" fill="#f1f1f4"/>
<path d="M330 640 C380 700 400 760 420 825 H330 C300 760 310 700 330 640Z" fill="#dcdce2"/>
<path d="M900 600 C960 680 960 760 930 825 H1000 C1000 740 980 660 900 600Z" fill="#dedee4"/>
</g>
<!-- neck -->
<path d="M580 480 H720 L730 640 L650 700 L590 610Z" fill="#b98e78" filter="url(#b1)"/>
<!-- scarf -->
<path d="M556 505 C570 600 600 700 650 800 L690 812 C670 720 640 640 600 560 L575 500Z" fill="#b8663c"/>
<path d="M566 540 C580 620 610 700 650 790" stroke="#e0a070" stroke-width="10" fill="none"/>
<path d="M660 740 L700 690 L720 825 H660Z" fill="#3f5a48"/>
<!-- hair back -->
<g filter="url(#b1)">
<path d="M505 330 C470 210 540 92 650 94 C760 96 812 210 830 320 C846 410 905 470 902 560 C898 680 880 760 905 825 L712 825 C700 730 735 650 705 590 C690 560 780 470 790 400 L780 240 L520 240Z" fill="#2c1d1a"/>
<path d="M790 400 C880 450 945 520 930 590 C950 680 900 740 930 825 H800Z" fill="#2a1b19"/>
<path d="M480 250 C470 230 480 215 500 210 L520 250Z" fill="#2c1d1a"/>
</g>
<!-- face -->
<g filter="url(#b1)">
<path d="M520 260 C530 180 600 150 660 152 C730 156 775 210 780 290 C790 380 770 450 730 500 C700 540 640 545 600 520 C550 480 515 380 520 260Z" fill="url(#face1)"/>
<path d="M520 250 C540 170 620 140 690 160 C740 180 770 220 775 250 C700 200 600 210 520 250Z" fill="#c7a08c"/>
</g>
<!-- features -->
<g filter="url(#b1)">
<path d="M530 258 Q575 238 625 258" stroke="#3a2620" stroke-width="13" fill="none"/>
<path d="M675 262 Q720 244 762 270" stroke="#3a2620" stroke-width="13" fill="none"/>
<ellipse cx="575" cy="302" rx="30" ry="12" fill="#3f2a26"/>
<ellipse cx="712" cy="310" rx="30" ry="12" fill="#3f2a26"/>
<path d="M615 370 Q640 392 668 372" stroke="#8a5c4c" stroke-width="10" fill="none"/>
<path d="M590 434 Q635 422 680 438 Q635 452 590 434Z" fill="#9a5f58"/>
</g>
<circle cx="522" cy="420" r="10" fill="none" stroke="#b89a60" stroke-width="4"/>
<circle cx="768" cy="432" r="10" fill="none" stroke="#b89a60" stroke-width="4"/>
</g></svg>
<span class="t" style="left:1555.2px;top:304.4px;font-size:14.80px;color:#fff;transform:scaleX(1.0744);-webkit-text-stroke:0.3px #fff;">Ismayılova Nigar</span>
<svg class="abs" style="left:1542.3px;top:429.6px" width="309.7" height="175" viewBox="10 35 1403 793" preserveAspectRatio="none">
<defs>
<filter id="v2a" x="-5%" y="-5%" width="110%" height="110%"><feGaussianBlur stdDeviation="8"/></filter>
<filter id="v2b" x="-5%" y="-5%" width="110%" height="110%"><feGaussianBlur stdDeviation="12"/></filter>
<clipPath id="c2"><rect x="10" y="35" width="1403" height="793"/></clipPath>
<linearGradient id="face2" x1="0" y1="0" x2="0" y2="1"><stop offset="0" stop-color="#e4cabc"/><stop offset="0.6" stop-color="#e2c2b6"/><stop offset="1" stop-color="#cfa596"/></linearGradient>
</defs>
<g clip-path="url(#c2)">
<rect x="10" y="35" width="1403" height="793" fill="#e4e1dd"/>
<rect x="10" y="35" width="160" height="300" fill="#cbcac6"/>
<rect x="460" y="35" width="200" height="330" fill="#dcdcdc"/>
<rect x="150" y="35" width="310" height="430" fill="#aaa6a6"/>
<rect x="1000" y="35" width="413" height="470" fill="#e9e5df"/>
<g filter="url(#v2a)"><rect x="150" y="60" width="31" height="100" fill="#4d6a80"/><rect x="180" y="68" width="31" height="92" fill="#c9c9cf"/><rect x="210" y="76" width="31" height="84" fill="#7a4a4c"/><rect x="240" y="64" width="31" height="96" fill="#8a8a92"/><rect x="270" y="72" width="31" height="88" fill="#5a3a3c"/><rect x="300" y="60" width="31" height="100" fill="#b04a4a"/><rect x="330" y="68" width="31" height="92" fill="#d8d8dc"/><rect x="360" y="76" width="31" height="84" fill="#3f8f9f"/><rect x="390" y="64" width="31" height="96" fill="#e2e2e6"/><rect x="420" y="72" width="31" height="88" fill="#c8ccd0"/><rect x="120" y="190" width="37" height="110" fill="#3a4468"/><rect x="156" y="198" width="37" height="102" fill="#55597a"/><rect x="192" y="206" width="37" height="94" fill="#9a9aa4"/><rect x="228" y="194" width="37" height="106" fill="#8a8e92"/><rect x="264" y="202" width="37" height="98" fill="#6f9a9a"/><rect x="300" y="200" width="26" height="100" fill="#3a3f52"/><rect x="325" y="208" width="26" height="92" fill="#2f5a7a"/><rect x="350" y="216" width="26" height="84" fill="#3f9fb8"/><rect x="375" y="204" width="26" height="96" fill="#d8d8dc"/><rect x="400" y="212" width="26" height="88" fill="#8a4a56"/><rect x="425" y="200" width="26" height="100" fill="#c8c8cc"/><rect x="230" y="320" width="38" height="120" fill="#9a9898"/><rect x="267" y="328" width="38" height="112" fill="#b8b4b0"/><rect x="303" y="336" width="38" height="104" fill="#3f9f90"/><rect x="340" y="324" width="38" height="116" fill="#2f8a80"/><rect x="377" y="332" width="38" height="108" fill="#5a5a66"/><rect x="413" y="320" width="38" height="120" fill="#3a4a5a"/><rect x="480" y="90" width="33" height="90" fill="#d8d4d0"/><rect x="512" y="98" width="33" height="82" fill="#c8c0bc"/><rect x="544" y="106" width="33" height="74" fill="#a04a5a"/><rect x="576" y="94" width="33" height="86" fill="#e0dcd8"/><rect x="608" y="102" width="33" height="78" fill="#b8b0b0"/><rect x="790" y="45" width="25" height="105" fill="#8a8a84"/><rect x="814" y="53" width="25" height="97" fill="#6a7a7a"/><rect x="839" y="61" width="25" height="89" fill="#c9a890"/><rect x="863" y="49" width="25" height="101" fill="#3f5a80"/><rect x="887" y="57" width="25" height="93" fill="#2f6fa8"/><rect x="911" y="45" width="25" height="105" fill="#c0602a"/><rect x="936" y="53" width="25" height="97" fill="#8a4a3a"/><rect x="1010" y="50" width="33" height="90" fill="#d8ccb8"/><rect x="1042" y="58" width="33" height="82" fill="#e6ded0"/><rect x="1074" y="66" width="33" height="74" fill="#c8a888"/><rect x="1106" y="54" width="33" height="86" fill="#b86a58"/><rect x="1138" y="62" width="33" height="78" fill="#c9544c"/><rect x="1170" y="50" width="33" height="90" fill="#d8d0c0"/><rect x="1202" y="58" width="33" height="82" fill="#e8e0d0"/><rect x="1234" y="66" width="33" height="74" fill="#c8b898"/><rect x="1266" y="54" width="33" height="86" fill="#d89058"/><rect x="1298" y="62" width="33" height="78" fill="#c8784a"/><rect x="1010" y="185" width="33" height="100" fill="#d8d0c0"/><rect x="1042" y="193" width="33" height="92" fill="#e8e2d6"/><rect x="1074" y="201" width="33" height="84" fill="#c8c0b0"/><rect x="1106" y="189" width="33" height="96" fill="#ece6da"/><rect x="1138" y="197" width="33" height="88" fill="#a84a4c"/><rect x="1170" y="185" width="33" height="100" fill="#c85a58"/><rect x="1202" y="193" width="33" height="92" fill="#e0d8cc"/><rect x="1234" y="201" width="33" height="84" fill="#4a3a3a"/><rect x="1266" y="189" width="33" height="96" fill="#d0c8b8"/><rect x="1298" y="197" width="33" height="88" fill="#8a8a84"/><rect x="1050" y="335" width="34" height="83" fill="#3a4a4a"/><rect x="1082" y="343" width="34" height="75" fill="#6f9f9f"/><rect x="1115" y="351" width="34" height="67" fill="#8fc0c8"/><rect x="1148" y="339" width="34" height="79" fill="#d8d0c0"/><rect x="1180" y="347" width="34" height="71" fill="#e8e0d0"/><rect x="1212" y="335" width="34" height="83" fill="#c8c0b0"/><rect x="1245" y="343" width="34" height="75" fill="#5a6a6a"/><rect x="1278" y="351" width="34" height="67" fill="#3f4a4a"/><rect x="1060" y="440" width="34" height="55" fill="#d8d8d0"/><rect x="1093" y="448" width="34" height="47" fill="#9fc8d0"/><rect x="1127" y="456" width="34" height="39" fill="#3f9fb0"/><rect x="1160" y="444" width="34" height="51" fill="#2f7f98"/><rect x="1193" y="452" width="34" height="43" fill="#e0d8cc"/><rect x="1227" y="440" width="34" height="55" fill="#c8c0b4"/><rect x="1360" y="45" width="19" height="105" fill="#c85a4a"/><rect x="1378" y="53" width="19" height="97" fill="#d8804a"/><rect x="1395" y="61" width="19" height="89" fill="#b84a3a"/><rect x="1355" y="200" width="20" height="80" fill="#c86a7a"/><rect x="1374" y="208" width="20" height="72" fill="#d89aa0"/><rect x="1394" y="216" width="20" height="64" fill="#c8a080"/>
<rect x="110" y="165" width="350" height="16" fill="#f0eeea"/><rect x="110" y="302" width="350" height="16" fill="#ebe9e5"/>
<rect x="1000" y="145" width="340" height="18" fill="#f4f2ee"/><rect x="1000" y="290" width="340" height="18" fill="#f4f2ee"/><rect x="1040" y="420" width="280" height="18" fill="#f0eeea"/>
<rect x="452" y="35" width="26" height="320" fill="#efefef"/><rect x="965" y="35" width="40" height="330" fill="#efede9"/><rect x="1330" y="35" width="26" height="420" fill="#f0eee8"/>
</g>
<g filter="url(#v2a)">
<rect x="10" y="318" width="72" height="150" fill="#2fb0f2"/><rect x="78" y="325" width="36" height="140" fill="#dfe3e6"/>
<path d="M10 462 H110 L122 500 L100 560 L10 572Z" fill="#2a5ea8"/>
<rect x="120" y="340" width="100" height="130" fill="#7a8a8a"/>
<path d="M170 470 L390 456 L392 528 L180 535Z" fill="#a9dccb"/>
<path d="M10 560 C120 520 260 520 400 540 L400 828 H10Z" fill="#f2efec"/>
<path d="M80 520 L240 500 L250 545 L90 560Z" fill="#e9efef"/>
</g>
<!-- sofa -->
<path d="M1058 505 C1180 480 1300 455 1413 442 V820 H1090 C1060 720 1055 600 1058 505Z" fill="#7b7b7c" filter="url(#v2a)"/>
<path d="M1320 455 L1413 440 V540 L1340 520Z" fill="#6a6a6c" filter="url(#v2a)"/>
<rect x="1090" y="800" width="323" height="28" fill="#e8e6e4"/>
<!-- chair back -->
<path d="M392 400 C400 350 470 340 560 350 L960 340 C1030 340 1055 380 1050 440 L1040 600 L400 600Z" fill="#efece8" filter="url(#v2a)"/>
<!-- shirt / body -->
<g filter="url(#v2a)">
<path d="M240 828 C260 700 330 620 420 600 L1000 600 C1060 660 1085 740 1092 828Z" fill="#e9ecf0"/>
<path d="M480 720 C600 690 700 720 760 828 H480Z" fill="#b7cde2"/>
<path d="M780 700 C900 690 1000 720 1080 828 H770Z" fill="#c3d6e8"/>
<path d="M650 650 L790 630 L770 800 L720 828 H700Z" fill="#bd8e7e"/>
<path d="M310 770 L480 790 L490 828 H300Z" fill="#3f5068"/>
</g>
<!-- hair -->
<g filter="url(#v2a)">
<path d="M500 330 C480 160 600 60 730 66 C860 70 950 180 940 330 C950 440 1000 520 1030 600 C1050 680 1000 760 900 780 C840 700 800 640 800 560 L560 560 C540 480 505 420 500 330Z" fill="#64463a"/>
<path d="M560 170 C620 90 820 90 890 180 C820 130 640 130 560 170Z" fill="#8a6a58"/>
<path d="M560 600 C600 640 640 690 650 720 C600 730 560 720 530 700 C540 660 550 630 560 600Z" fill="#7a5c4a"/>
<path d="M850 640 C940 640 1010 620 1030 600 C1050 680 1010 760 900 780Z" fill="#a88a70"/>
</g>
<!-- face -->
<g filter="url(#v2a)">
<path d="M570 300 C570 190 640 130 720 132 C810 134 870 200 868 310 C866 400 850 470 800 530 C760 580 690 580 650 540 C600 490 570 400 570 300Z" fill="url(#face2)"/>
<path d="M640 500 L800 520 L790 640 L650 650Z" fill="#c9988a"/>
</g>
<!-- hand -->
<g filter="url(#v2a)">
<path d="M560 300 C580 290 600 300 606 330 L640 440 C700 450 720 480 700 520 C680 600 620 640 560 680 L470 790 L350 770 C380 680 400 600 430 540 C460 490 520 470 560 460Z" fill="#e8cdc2"/>
<path d="M470 600 C520 560 600 540 690 520 C670 600 620 640 560 680Z" fill="#d9b5a8"/>
</g>
<!-- features -->
<g filter="url(#v2a)">
<path d="M590 262 Q640 246 690 262" stroke="#6a4a40" stroke-width="12" fill="none"/>
<path d="M760 272 Q810 262 850 286" stroke="#6a4a40" stroke-width="12" fill="none"/>
<ellipse cx="640" cy="318" rx="26" ry="10" fill="#6a7a6c"/><ellipse cx="790" cy="334" rx="28" ry="11" fill="#5f8a76"/>
<path d="M575 300 Q640 280 700 310 Q780 300 870 330" stroke="#c8b0a8" stroke-width="5" fill="none"/>
<path d="M668 486 Q710 478 748 494 Q710 512 668 486Z" fill="#a8444c"/>
</g>
<ellipse cx="830" cy="800" rx="22" ry="34" fill="#1f2a36"/>
</g></svg>
<div class="abs" style="left:1550px;top:678.3px;width:199px;height:24.8px;border-radius:4px;background:#646cb8"></div>
<span class="t" style="left:1555.4px;top:682.6px;font-size:14.80px;color:#fff;transform:scaleX(1.0586);-webkit-text-stroke:0.3px #fff;">María Méndez Rocasolano</span>
<svg class="abs" style="left:1591.8px;top:706.7px" width="176.2" height="130" viewBox="222 200 755 557" preserveAspectRatio="none">
<defs>
<filter id="v3a" x="-5%" y="-5%" width="110%" height="110%"><feGaussianBlur stdDeviation="4"/></filter>
<clipPath id="c3"><rect x="222" y="200" width="755" height="557"/></clipPath>
<linearGradient id="ceil" x1="0" y1="0" x2="0.3" y2="1"><stop offset="0" stop-color="#c3bfad"/><stop offset="0.35" stop-color="#d3d0c3"/><stop offset="0.7" stop-color="#d0cdc1"/><stop offset="1" stop-color="#c9c6ba"/></linearGradient>
<linearGradient id="face3" x1="0" y1="0" x2="1" y2="0"><stop offset="0" stop-color="#b07a6c"/><stop offset="0.45" stop-color="#c89486"/><stop offset="1" stop-color="#a87266"/></linearGradient>
</defs>
<g clip-path="url(#c3)">
<rect x="222" y="200" width="755" height="557" fill="url(#ceil)"/>
<g filter="url(#v3a)">
<path d="M222 300 L360 470 L360 757 H222Z" fill="#bdb9ad"/>
<path d="M222 440 L360 490 V545 L222 500Z" fill="#dedbd0"/>
<path d="M360 470 H770 V757 H360Z" fill="#d3d0c5"/>
<path d="M222 490 L312 540 V625 L222 640Z" fill="#3a3a3c"/>
<path d="M222 540 L258 555 V640 H222Z" fill="#dfe6ee"/>
<path d="M258 570 L300 585 V630 H258Z" fill="#8a8e98"/>
<path d="M760 480 H977 V757 H760Z" fill="#cfccc1"/>
<path d="M826 478 L890 388 V478Z" fill="#e6e3da"/>
<path d="M890 385 H977 V520 H890Z" fill="#c6c3b8"/>
<path d="M950 360 L977 350 V500 L950 480Z" fill="#dedbd2"/>
<rect x="756" y="480" width="8" height="160" fill="#ece9e0"/>
<rect x="830" y="662" width="22" height="40" fill="#2a2a2c"/>
</g>
<!-- jacket -->
<g filter="url(#v3a)">
<path d="M262 757 C262 700 270 650 300 636 L490 612 L580 690 L670 615 L790 648 C840 670 870 720 880 757Z" fill="#2e1a30"/>
<path d="M495 640 L590 700 L665 640 L660 757 H500Z" fill="#a9a2c6"/>
<path d="M490 612 L540 757 H470Z" fill="#3a2038"/><path d="M672 615 L700 757 H650Z" fill="#341c34"/>
</g>
<!-- head -->
<g filter="url(#v3a)">
<path d="M498 470 C496 400 540 360 596 360 C652 360 694 402 690 470 C706 480 702 520 690 540 C682 600 650 640 596 644 C540 644 500 600 492 540 C476 520 476 482 498 470Z" fill="url(#face3)"/>
<path d="M505 450 C510 400 545 364 596 362 C650 364 684 400 688 450 C640 420 560 420 505 450Z" fill="#cf9c90"/>
<path d="M500 540 C530 600 650 610 690 540 C680 610 650 644 596 646 C545 646 510 610 500 540Z" fill="#8f6a62"/>
</g>
<g fill="#8a6a66" fill-opacity="0.55" stroke="#2a2230" stroke-width="6.5" filter="url(#v3a)">
<rect x="500" y="464" width="80" height="50" rx="16"/><rect x="612" y="478" width="78" height="52" rx="16"/><path d="M580 486 Q596 480 612 494" fill="none"/>
</g>
<g filter="url(#v3a)"><ellipse cx="540" cy="490" rx="16" ry="8" fill="#4a3634"/><ellipse cx="650" cy="504" rx="16" ry="8" fill="#4a3634"/>
<path d="M570 520 Q590 560 612 528" stroke="#9a6a5e" stroke-width="8" fill="none"/></g>
<path d="M556 584 Q592 574 626 588" stroke="#7a4a48" stroke-width="7" fill="none" filter="url(#v3a)"/>
</g></svg>
<div class="abs" style="left:1591.8px;top:807.5px;width:94px;height:25.4px;border-radius:0 4px 4px 0;background:rgba(48,44,46,0.78)"></div>
<span class="t" style="left:1555.4px;top:812.3px;font-size:14.80px;color:#fff;transform:scaleX(1.0690);-webkit-text-stroke:0.3px #fff;">Fabio Benintende</span>
</body>
</html>
